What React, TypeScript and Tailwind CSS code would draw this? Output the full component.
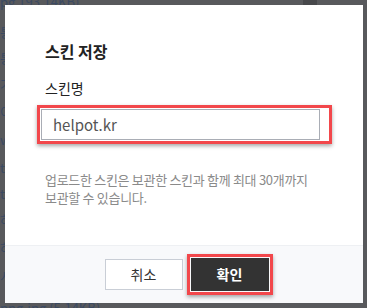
import { useState } from 'react';

const FONT = { fontFamily: '"Noto Sans CJK KR", "Noto Sans", sans-serif' };

function PageBehind() {
  // faint page content showing round the dialog
  const rows = [
    { y: 'top-[-6px]', t: 'pg 193.14KB)' },
    { y: 'top-[24px]', t: '통' },
    { y: 'top-[50px]', t: '통' },
    { y: 'top-[76px]', t: '기' },
    { y: 'top-[104px]', t: '이' },
    { y: 'top-[132px]', t: 'w' },
    { y: 'top-[160px]', t: 't' },
    { y: 'top-[186px]', t: 't' },
    { y: 'top-[212px]', t: '하' },
    { y: 'top-[240px]', t: '하' },
    { y: 'top-[268px]', t: '시' },
    { y: 'top-[300px]', t: 'png.jpg (5.14KB)' },
  ];
  return (
    <div className="absolute inset-0 bg-[#58595c]">
      {rows.map((r) => (
        <div key={r.y} className={`absolute left-0 ${r.y} text-[13px] leading-4 text-[#3b4a63]`}>
          {r.t}
        </div>
      ))}
      <div className="absolute right-[50px] top-0 h-[5px] w-[14px] bg-[#47484b]" />
    </div>
  );
}

export default function App() {
  const [name, setName] = useState('helpot.kr');

  return (
    <div className="relative h-[308px] w-[367px] overflow-hidden" style={FONT}>
      <PageBehind />

      <div className="absolute left-[5px] top-[5px] flex h-[298px] w-[358px] flex-col bg-white">
        <div className="flex-1 px-[40px] pt-[34px]">
          <h2 className="text-[16px] font-bold leading-6 text-[#222]">스킨 저장</h2>

          <div className="mt-[15px] text-[14px] leading-5 text-[#222]">스킨명</div>

          <div className="mt-[7px] ml-[-8px] w-[295px] border-[3px] border-[#f2474b] p-px shadow-[0_2px_4px_rgba(0,0,0,0.35)]">
            <input
              value={name}
              onChange={(e) => setName(e.target.value)}
              className="block h-[31px] w-[279px] border border-[#a9adb5] bg-white px-[11px] text-[15px] text-[#555] outline-none"
              style={FONT}
            />
          </div>

          <p className="mt-[27px] text-[13px] leading-[18px] tracking-[-0.3px] text-[#8a8a8a]">
            업로드한 스킨은 보관한 스킨과 함께 최대 30개까지
            <br />
            보관할 수 있습니다.
          </p>
        </div>

        <div className="flex h-[58px] items-center justify-center gap-[4px] border-t border-[#eef0f3] bg-[#f8f9fb] pl-[9px]">
          <button className="h-[31px] w-[78px] border border-[#c9ced6] bg-white text-[14px] text-[#333]">
            취소
          </button>
          <div className="border-[3px] border-[#f2474b] p-px shadow-[0_2px_4px_rgba(0,0,0,0.35)]">
            <button className="block h-[33px] w-[78px] bg-[#333333] text-[14px] font-bold text-white">
              확인
            </button>
          </div>
        </div>
      </div>
    </div>
  );
}
